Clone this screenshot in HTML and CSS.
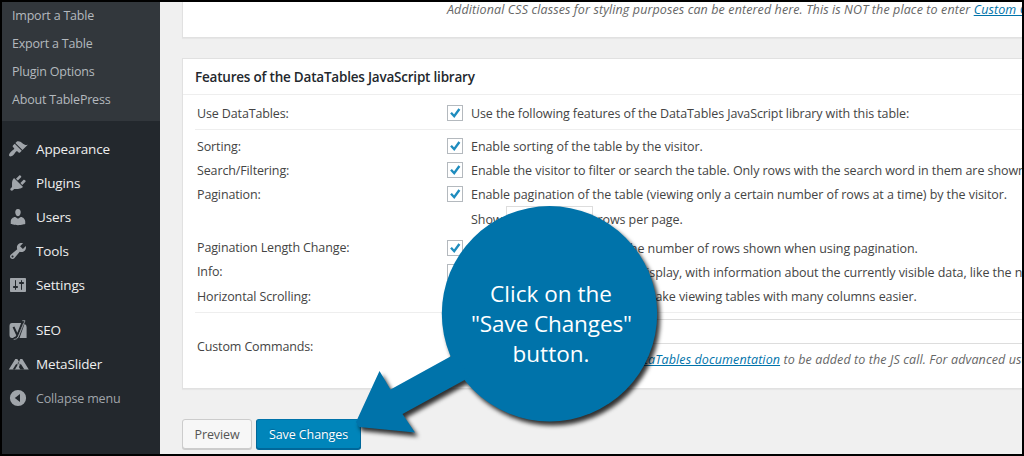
FILE: index.html
```html
<!DOCTYPE html>
<html lang="en">
<head>
  <meta charset="UTF-8" />
  <meta name="viewport" content="width=device-width, initial-scale=1.0" />
  <title>TablePress</title>
  <link rel="stylesheet" href="styles.css">
</head>
<body>
  <div class="frame">
    <nav class="sidebar">
      <ul class="submenu">
        <li>Import a Table</li>
        <li>Export a Table</li>
        <li>Plugin Options</li>
        <li>About TablePress</li>
      </ul>
      <ul class="menu">
        <li>
          <svg class="icon" viewBox="0 0 20 20"><path d="M14.48 11.06L7.41 3.99l1.5-1.5c.5-.56 2.3-.47 3.51.32 1.21.8 1.43 1.28 2.91 2.1 1.18.64 2.45 1.26 4.45.85zm-.71.71L6.7 4.7 4.93 6.47c-.39.39-.39 1.02 0 1.41l1.06 1.06c.39.39.39 1.03 0 1.42-.6.6-1.43 1.11-2.21 1.69-.35.26-.7.53-1.01.84C1.43 14.23.4 16.08 1.4 17.07c.99 1 2.84-.03 4.18-1.36.31-.31.58-.66.85-1.02.57-.78 1.08-1.61 1.69-2.21.39-.39 1.02-.39 1.41 0l1.06 1.06c.39.39 1.02.39 1.41 0z"/></svg>
          <span>Appearance</span>
        </li>
        <li>
          <svg class="icon" viewBox="0 0 20 20"><path d="M13.11 4.36L9.87 7.6 8 5.73l3.24-3.24c.35-.34 1.05-.2 1.56.32.52.51.66 1.21.31 1.55zm-8 1.77l.91-1.12 9.01 9.01-1.19.84c-.71.71-2.63 1.16-3.82 1.16H6.14L4.9 17.26c-.59.59-1.54.59-2.12 0-.59-.58-.59-1.53 0-2.12l1.24-1.24v-3.88c0-1.13.4-3.19 1.09-3.89zm7.26 3.97l3.24-3.24c.34-.35 1.04-.21 1.55.31.52.51.66 1.21.31 1.55l-3.24 3.25z"/></svg>
          <span>Plugins</span>
        </li>
        <li>
          <svg class="icon" viewBox="0 0 20 20"><path d="M10 9.25c-2.27 0-2.73-3.44-2.73-3.44C7 4.02 7.82 2 9.97 2c2.16 0 2.98 2.02 2.71 3.81 0 0-.41 3.44-2.68 3.44zm0 2.57L12.72 10c2.39 0 4.52 2.33 4.52 4.53v2.49s-3.65 1.13-7.24 1.13c-3.65 0-7.24-1.13-7.24-1.13v-2.49c0-2.25 1.94-4.48 4.47-4.48z"/></svg>
          <span>Users</span>
        </li>
        <li>
          <svg class="icon" viewBox="0 0 20 20"><path d="M16.68 9.77c-1.34 1.34-3.3 1.67-4.95.99l-5.41 6.52c-.99.99-2.59.99-3.58 0s-.99-2.59 0-3.57l6.52-5.42c-.68-1.65-.35-3.61.99-4.95 1.28-1.28 3.12-1.62 4.72-1.06l-2.89 2.89 2.82 2.82 2.86-2.87c.53 1.58.18 3.39-1.08 4.65zM3.81 16.21c.4.39 1.04.39 1.43 0 .4-.4.4-1.04 0-1.43-.39-.4-1.03-.4-1.43 0-.39.39-.39 1.03 0 1.43z"/></svg>
          <span>Tools</span>
        </li>
        <li>
          <svg class="icon" viewBox="0 0 20 20"><path d="M18 16V4c0-.55-.45-1-1-1H3c-.55 0-1 .45-1 1v12c0 .55.45 1 1 1h14c.55 0 1-.45 1-1zM8 11h1c.55 0 1 .45 1 1s-.45 1-1 1H8v1.5c0 .28-.22.5-.5.5s-.5-.22-.5-.5V13H6c-.55 0-1-.45-1-1s.45-1 1-1h1V5.5c0-.28.22-.5.5-.5s.5.22.5.5V11zm5-2h-1c-.55 0-1-.45-1-1s.45-1 1-1h1V5.5c0-.28.22-.5.5-.5s.5.22.5.5V7h1c.55 0 1 .45 1 1s-.45 1-1 1h-1v5.5c0 .28-.22.5-.5.5s-.5-.22-.5-.5V9z"/></svg>
          <span>Settings</span>
        </li>
        <li class="separated">
          <svg class="icon" viewBox="0 0 20 20">
            <path d="M4 3H15.500L10 18H4Q1.500 18 1.500 15V6Q1.500 3 4 3zM16.500 4Q18.600 4.500 18.600 7V18H11.500Z"/>
            <path class="cut" d="M5.500 6.800L9 14.500M14.800 1.500L9.500 15Q8.300 18.300 5.500 18.300"/>
            <path class="edge" d="M14.300 .7H17L10.500 16.500Q9.300 19.500 5.700 19.500"/>
          </svg>
          <span>SEO</span>
        </li>
        <li>
          <svg class="icon" viewBox="0 0 20 20"><path d="M.8 15.500L7.300 5H9.300L11 7.700 12.300 5H14.300L20.800 15.500H.8Z"/><path class="gap" d="M4.700 15.500L8.300 9.800 9.300 11.300 6.800 15.500ZM12.300 15.500L10.900 13 12.700 9.800 16.400 15.500Z"/><path class="seam" d="M11 7.700L6.500 15.500M10.200 8.500L14.200 15.500"/></svg>
          <span>MetaSlider</span>
        </li>
        <li class="collapse">
          <svg class="icon" viewBox="0 0 20 20"><path fill-rule="evenodd" d="M10 1.900a8.100 8.100 0 1 0 0 16.200 8.100 8.100 0 0 0 0-16.200zM12 6v8L6.800 10z"/></svg>
          <span>Collapse menu</span>
        </li>
      </ul>
    </nav>

    <main class="content">
      <section class="panel panel-top">
        <p class="description">Additional CSS classes for styling purposes can be entered here. This is NOT the place to enter <a>Custom CSS</a> code!</p>
      </section>

      <section class="panel">
        <h2>Features of the DataTables JavaScript library</h2>
        <div class="options">
          <div class="group group-use">
            <div class="row">
              <label>Use DataTables:</label>
              <div class="field"><i class="check"><svg viewBox="0 0 14 14"><path d="M3 6.800L6.200 10.200 11.400 3"/></svg></i><span>Use the following features of the DataTables JavaScript library with this table:</span></div>
            </div>
          </div>
          <div class="group group-features">
            <div class="row">
              <label>Sorting:</label>
              <div class="field"><i class="check"><svg viewBox="0 0 14 14"><path d="M3 6.800L6.200 10.200 11.400 3"/></svg></i><span>Enable sorting of the table by the visitor.</span></div>
            </div>
            <div class="row">
              <label>Search/Filtering:</label>
              <div class="field"><i class="check"><svg viewBox="0 0 14 14"><path d="M3 6.800L6.200 10.200 11.400 3"/></svg></i><span>Enable the visitor to filter or search the table. Only rows with the search word in them are shown.</span></div>
            </div>
            <div class="row">
              <label>Pagination:</label>
              <div class="field"><i class="check"><svg viewBox="0 0 14 14"><path d="M3 6.800L6.200 10.200 11.400 3"/></svg></i><span>Enable pagination of the table (viewing only a certain number of rows at a time) by the visitor.</span></div>
            </div>
            <div class="row row-show">
              <div class="field">Show <i class="number"></i> rows per page.</div>
            </div>
            <div class="row">
              <label>Pagination Length Change:</label>
              <div class="field"><i class="check"><svg viewBox="0 0 14 14"><path d="M3 6.800L6.200 10.200 11.400 3"/></svg></i><span>Allow the visitor to change the number of rows shown when using pagination.</span></div>
            </div>
            <div class="row">
              <label>Info:</label>
              <div class="field"><i class="check"></i><span>Enable the table information display, with information about the currently visible data, like the number of entries.</span></div>
            </div>
            <div class="row">
              <label>Horizontal Scrolling:</label>
              <div class="field"><i class="check"></i><span>Enable horizontal scrolling, to make viewing tables with many columns easier.</span></div>
            </div>
          </div>
          <div class="group group-custom">
            <label>Custom Commands:</label>
            <div class="command">
              <div class="textbox"></div>
              <p class="description">Additional parameters from the <a>DataTables documentation</a> to be added to the JS call. For advanced use only.</p>
            </div>
          </div>
        </div>
      </section>

      <div class="buttons">
        <button class="btn">Preview</button>
        <button class="btn primary">Save Changes</button>
      </div>
    </main>

    <!-- callout over the form -->
    <svg class="callout" viewBox="0 0 1024 456">
      <g class="bubble">
        <circle cx="549.500" cy="313.800" r="107.700"/>
        <path d="M356 422L379.500 371 390.500 389.500 455 354 470 377 402.500 414 415 432.500 359 427Z"/>
      </g>
      <text x="490" y="302" textLength="122">Click on the</text>
      <text x="471" y="332" textLength="161">"Save Changes"</text>
      <text x="512.500" y="362" textLength="77">button.</text>
    </svg>
  </div>
</body>
</html>
```
FILE: styles.css
```css
* {
  box-sizing: border-box;
  margin: 0;
  padding: 0;
}

body {
  font-family: 'Open Sans', 'Noto Sans', sans-serif;
  font-size: 12.5px;
  color: #444;
  background: #000;
}

.frame {
  position: relative;
  display: flex;
  width: 1024px;
  height: 456px;
  border: 2px solid #000;
  overflow: hidden;
  background: #f0f0f0;
}

.sidebar {
  width: 158px;
  flex-shrink: 0;
  background: #23282d;
  color: #eee;
}

.sidebar ul {
  list-style: none;
}

.submenu {
  height: 119px;
  padding-left: 10px;
  background: #32373c;
  color: #b4b9be;
  letter-spacing: -0.2px;
}

.submenu li {
  height: 28px;
  line-height: 27px;
}

.menu {
  padding-top: 11px;
  font-size: 13.5px;
  letter-spacing: -0.15px;
}

.menu li {
  display: flex;
  align-items: center;
  gap: 8px;
  height: 34px;
  padding-left: 6px;
}

.menu .separated {
  margin-top: 11px;
}

.menu .collapse {
  font-size: 12.5px;
  color: #a0a5aa;
}

.icon {
  width: 20px;
  height: 20px;
  fill: #a0a5aa;
  overflow: visible;
}

.cut {
  fill: none;
  stroke: #23282d;
  stroke-width: 2;
}

.edge {
  fill: none;
  stroke: #a0a5aa;
  stroke-width: 0.8;
}

.gap {
  fill: #23282d;
}

.seam {
  stroke: #23282d;
  stroke-width: 0.5;
}

.content {
  width: 880px;
  flex-shrink: 0;
  padding-left: 22px;
}

.panel {
  height: 331px;
  background: #fff;
  border: 1px solid #e1e1e1;
  box-shadow: 0 1px 1px rgba(0, 0, 0, 0.04);
  white-space: nowrap;
}

.panel-top {
  height: 36px;
  margin-bottom: 20px;
  border-top: 0;
  padding-left: 264px;
}

.description {
  font-style: italic;
  color: #666;
  line-height: 16px;
  letter-spacing: 0.11px;
}

.description a {
  color: #0073aa;
  text-decoration: underline;
}

h2 {
  height: 36px;
  padding-left: 12px;
  border-bottom: 1px solid #eee;
  font-size: 13.5px;
  font-weight: 600;
  line-height: 36px;
  letter-spacing: -0.21px;
  color: #23282d;
}

.options {
  padding-left: 12px;
}

.group {
  border-bottom: 1px solid #eee;
}

.group-use {
  height: 35px;
  padding-top: 6px;
}

.group-use .field {
  letter-spacing: -0.11px;
}

.group-features {
  height: 183px;
  padding-top: 4px;
}

.row {
  display: flex;
  height: 24.2px;
  align-items: center;
}

.row label,
.group-custom label {
  width: 252px;
  padding-left: 2px;
  flex-shrink: 0;
  letter-spacing: -0.13px;
}

.field {
  display: flex;
  align-items: center;
  gap: 8px;
  letter-spacing: -0.07px;
}

.field span {
  padding-top: 1px;
}

.row-show {
  height: 29px;
  padding: 0 0 4px 276px;
}

.row-show .field {
  gap: 4px;
}

.number {
  width: 87px;
  height: 27px;
  border: 1px solid #ddd;
}

.check {
  width: 16px;
  height: 16px;
  border: 1px solid #b4b9be;
  background: #fff;
}

.check svg {
  display: block;
  width: 14px;
  height: 14px;
  fill: none;
  stroke: #1e8cbe;
  stroke-width: 2.4;
}

.group-custom {
  display: flex;
  height: 75px;
  border-bottom: 0;
}

.group-custom label {
  padding-top: 25px;
}

.command {
  flex: 1;
  padding-top: 6px;
}

.textbox {
  height: 25px;
  margin-bottom: 8px;
  border: 1px solid #ddd;
}

.buttons {
  display: flex;
  gap: 4px;
  margin-top: 30px;
}

.btn {
  width: 70px;
  height: 30px;
  border: 1px solid #ccc;
  border-radius: 3px;
  background: #f7f7f7;
  box-shadow: 0 1px 0 #ccc;
  color: #555;
  font: inherit;
  letter-spacing: -0.1px;
}

.btn.primary {
  width: 105px;
  border-color: #0073aa #006799 #006799;
  background: #0085ba;
  box-shadow: 0 1px 0 #006799;
  color: #fff;
  text-shadow: 0 -1px 1px #006799;
}

.callout {
  position: absolute;
  left: -2px;
  top: -2px;
  width: 1024px;
  height: 456px;
}

.bubble {
  fill: #0073aa;
  filter: drop-shadow(3px 4px 2px rgba(0, 0, 0, 0.8));
}

.callout text {
  fill: #fff;
  font-size: 22.5px;
  font-weight: 500;
}
```
